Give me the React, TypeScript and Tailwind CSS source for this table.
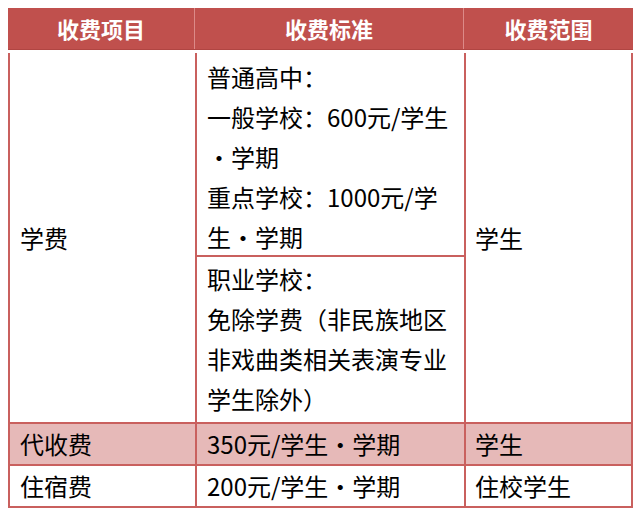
import React from "react";

const font = { fontFamily: '"Noto Sans CJK SC", "Noto Sans", sans-serif' };

export default function App() {
  return (
    <div className="w-[640px] h-[518px] bg-white pt-[8px] pl-[8px]" style={font}>
      <div className="w-[625px]">
        {/* header */}
        <div className="flex h-[42px] bg-[#c0504d] text-white font-bold text-[22px] border-b border-[#b04542]">
          <div className="w-[187px] flex items-center justify-center border-r border-[#dc8a88]">收费项目</div>
          <div className="w-[269px] flex items-center justify-center border-r border-[#dc8a88]">收费标准</div>
          <div className="flex-1 flex items-center justify-center">收费范围</div>
        </div>
        <div className="h-[3px]" />
        {/* body */}
        <div className="border-l-2 border-r-2 border-b-2 border-[#c9605e] text-[24px] text-black leading-[40px]">
          <div className="flex h-[371px] border-b-2 border-[#c9605e]">
            <div className="w-[187px] flex items-center pl-[10px] border-r-2 border-[#c9605e]">学费</div>
            <div className="w-[269px] flex flex-col border-r-2 border-[#c9605e] whitespace-nowrap">
              <div className="h-[204px] pt-[4px] pl-[10px] border-b-2 border-[#c9605e]">
                <div>普通高中：</div>
                <div>一般学校：600元/学生</div>
                <div>·学期</div>
                <div>重点学校：1000元/学</div>
                <div>生·学期</div>
              </div>
              <div className="flex-1 pt-[2px] pl-[10px]">
                <div>职业学校：</div>
                <div>免除学费（非民族地区</div>
                <div>非戏曲类相关表演专业</div>
                <div>学生除外）</div>
              </div>
            </div>
            <div className="flex-1 flex items-center pl-[9px]">学生</div>
          </div>
          <div className="flex h-[42px] bg-[#e6b9b8] border-b-2 border-[#c9605e]">
            <div className="w-[187px] flex items-center pl-[10px] border-r-2 border-[#c9605e]">代收费</div>
            <div className="w-[269px] flex items-center pl-[10px] border-r-2 border-[#c9605e] whitespace-nowrap">350元/学生·学期</div>
            <div className="flex-1 flex items-center pl-[9px]">学生</div>
          </div>
          <div className="flex h-[40px]">
            <div className="w-[187px] flex items-center pl-[10px] border-r-2 border-[#c9605e]">住宿费</div>
            <div className="w-[269px] flex items-center pl-[10px] border-r-2 border-[#c9605e] whitespace-nowrap">200元/学生·学期</div>
            <div className="flex-1 flex items-center pl-[9px]">住校学生</div>
          </div>
        </div>
      </div>
    </div>
  );
}
